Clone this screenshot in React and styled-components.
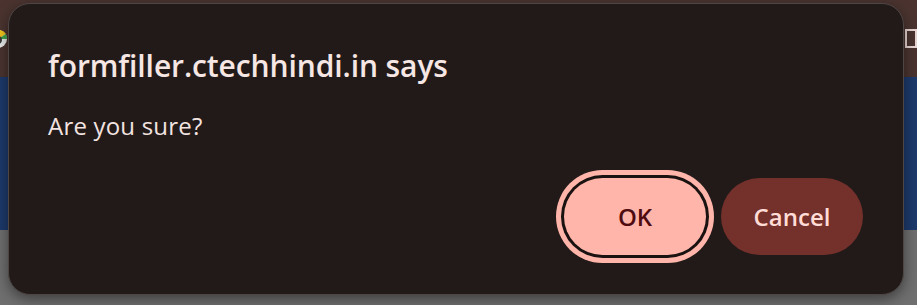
import styled, { createGlobalStyle } from "styled-components";

const GlobalStyle = createGlobalStyle`
  html, body {
    margin: 0;
    padding: 0;
    background: #6f6f6f;
  }
  body {
    font-family: "Open Sans", "Noto Sans", sans-serif;
  }
`;

export default function App() {
  return (
    <Page>
      <GlobalStyle />
      <Backdrop>
        <Band $color="#4b3430" $height={77} />
        <Band $color="#1d3a6c" $height={153} />
        <Band $color="#6f6f6f" $height={75} />
      </Backdrop>

      <TabIcon>
        <svg width="14" height="28" viewBox="0 0 14 28">
          <circle cx="2" cy="14" r="9" fill="#e9ecea" />
          <path d="M2 5 A9 9 0 0 1 10 9 L2 14 Z" fill="#f2c31b" />
          <path d="M10 9 A9 9 0 0 1 11 14 L2 14 Z" fill="#3fa34d" />
          <circle cx="2" cy="15" r="4" fill="#3a3a3a" />
        </svg>
      </TabIcon>
      <WindowBox />

      <Dialog role="dialog">
        <Title>formfiller.ctechhindi.in says</Title>
        <Message>Are you sure?</Message>
        <Actions>
          <Button $primary autoFocus>OK</Button>
          <Button>Cancel</Button>
        </Actions>
      </Dialog>
    </Page>
  );
}

const Page = styled.div`
  position: relative;
  width: 917px;
  height: 305px;
  overflow: hidden;
`;

const Backdrop = styled.div`
  display: flex;
  flex-direction: column;
  height: 100%;
`;

const Band = styled.div`
  height: ${(p) => p.$height}px;
  background: ${(p) => p.$color};
`;

const TabIcon = styled.div`
  position: absolute;
  left: -4px;
  top: 25px;
`;

const WindowBox = styled.div`
  position: absolute;
  left: 905px;
  top: 29px;
  width: 8px;
  height: 15px;
  border: 2px solid #e7d6d3;
`;

const Dialog = styled.div`
  position: absolute;
  left: 8px;
  top: 3px;
  width: 896px;
  height: 292px;
  box-sizing: border-box;
  padding: 44px 40px 0 39px;
  display: flex;
  flex-direction: column;
  background: #221a19;
  border: 1px solid #4d4644;
  border-radius: 22px;
  box-shadow: 0 4px 14px rgba(0, 0, 0, 0.45);
`;

const Title = styled.h1`
  margin: 0;
  font-size: 30px;
  line-height: 36px;
  font-weight: 600;
  letter-spacing: -0.1px;
  color: #f6e7e4;
`;

const Message = styled.p`
  margin: 27px 0 0;
  font-size: 24px;
  line-height: 30px;
  font-weight: 400;
  letter-spacing: 0.2px;
  color: #f3e4e1;
`;

const Actions = styled.div`
  display: flex;
  justify-content: flex-end;
  gap: 15px;
  margin-top: auto;
  margin-bottom: 39px;
`;

const Button = styled.button`
  width: 142px;
  height: 77px;
  border: none;
  border-radius: 39px;
  font-family: "Open Sans", "Noto Sans", sans-serif;
  font-size: 24px;
  font-weight: 600;
  cursor: pointer;
  background: ${(p) => (p.$primary ? "#ffb5aa" : "#74302a")};
  color: ${(p) => (p.$primary ? "#4f0c10" : "#ffdcd6")};
  box-shadow: ${(p) =>
    p.$primary ? "0 0 0 3px #1a1211, 0 0 0 8px #ffb5aa" : "none"};
  outline: none;
`;
